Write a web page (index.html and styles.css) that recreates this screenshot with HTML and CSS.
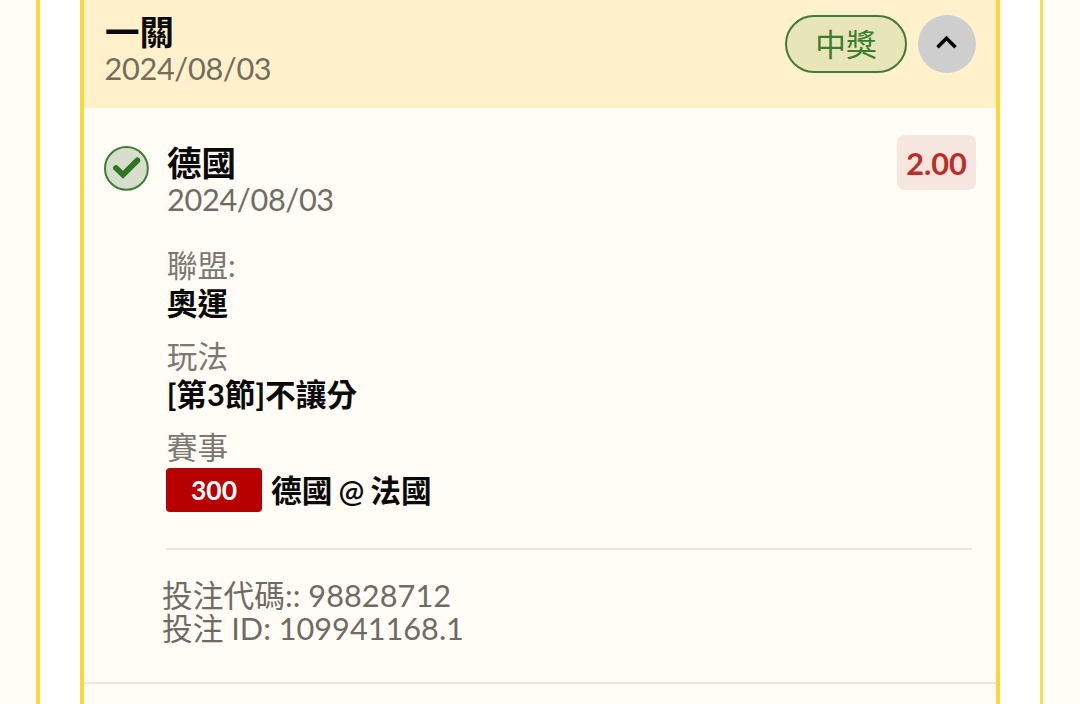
FILE: index.html
```html
<!DOCTYPE html>
<html lang="zh-Hant">
<head>
<meta charset="utf-8">
<title>投注</title>
<link rel="stylesheet" href="styles.css">
</head>
<body>
<div class="outer">
  <main class="card">
    <header class="card-head">
      <div class="head-text">
        <h1 class="title">一關</h1>
        <p class="date">2024/08/03</p>
      </div>
      <span class="status">中獎</span>
      <button class="toggle" aria-label="收合">
        <svg width="22" height="16" viewBox="0 0 22 16"><path d="M1.5 14.2 10.5 5.2 19.5 14.2" fill="none" stroke="#000" stroke-width="3.6"/></svg>
      </button>
    </header>
    <section class="bet">
      <svg class="check" width="46" height="46" viewBox="0 0 46 46"><circle cx="23.4" cy="23.4" r="21.4" fill="#d5dfcb" stroke="#427a38" stroke-width="2"/><path d="M13 23 20 29.8 34.4 15.4" fill="none" stroke="#2f7522" stroke-width="5.8" stroke-linecap="round"/></svg>
      <div class="bet-main">
        <div class="bet-top">
          <div class="head-text">
            <h2 class="title">德國</h2>
            <p class="date">2024/08/03</p>
          </div>
          <span class="odds">2.00</span>
        </div>
        <dl class="details">
          <dt>聯盟:</dt>
          <dd>奧運</dd>
          <dt>玩法</dt>
          <dd>[第3節]不讓分</dd>
          <dt>賽事</dt>
          <dd class="match"><span class="code">300</span><span class="teams">德國 @ 法國</span></dd>
        </dl>
        <div class="ids">
          <p class="bet-code">投注代碼:: 98828712</p>
          <p>投注 ID: 109941168.1</p>
        </div>
      </div>
    </section>
  </main>
</div>
</body>
</html>
```
FILE: styles.css
```css
* { box-sizing: border-box; margin: 0; padding: 0; }
body {
  height: 704px;
  overflow: hidden;
  padding: 0 37px 0 36px;
  background: #fffdf5;
  color: #0a0a0a;
  font-family: Lato, "Noto Sans CJK TC", sans-serif;
  font-size: 30.7px;
}
.outer {
  height: 704px;
  padding: 0 40px;
  background: #fff;
  border-left: 4px solid #fdd835;
  border-right: 3px solid #fbdc49;
}
.card {
  height: 704px;
  background: #fffdf5;
  border: solid #fdd835;
  border-width: 0 4px;
}
.card-head {
  display: flex;
  align-items: flex-start;
  height: 108px;
  padding: 15px 20px 0 21px;
  background: #fff1cc;
}
.head-text { flex: 1; }
.card-head .head-text { margin-top: -2px; }
.title {
  height: 37px;
  font-size: 34.5px;
  font-weight: 700;
  line-height: 37px;
}
.date {
  height: 37px;
  line-height: 37px;
  color: #6f6c66;
  letter-spacing: -0.33px;
}
.card-head .date { color: #736d5c; margin-left: -0.5px; }
.status {
  width: 122px;
  height: 58px;
  margin-right: 11px;
  border: 2px solid #427a38;
  border-radius: 29px;
  background: #e8e6b9;
  color: #3b7d2d;
  line-height: 56px;
  text-align: center;
}
.toggle {
  display: flex;
  align-items: center;
  justify-content: center;
  width: 58px;
  height: 58px;
  padding-bottom: 6px;
  border: 0;
  border-radius: 50%;
  background: #cecece;
}
.bet {
  display: flex;
  gap: 17px;
  height: 576px;
  padding: 27px 20px 0 19px;
  border-bottom: 2px solid #e9e5df;
}
.check { flex: none; margin-top: 10px; }
.bet-main { flex: 1; }
.bet-top { display: flex; height: 112px; }
.bet-top .head-text { padding: 9px 0 0 1px; }
.odds {
  width: 79px;
  height: 55px;
  border-radius: 8px;
  background: #f7e6df;
  color: #bb2e25;
  font-weight: 700;
  line-height: 57px;
  text-align: center;
}
.details {
  height: 303px;
  margin-right: 4px;
  border-bottom: 2px solid #e9e5df;
}
.details dt {
  height: 38px;
  padding-left: 0.7px;
  color: #7b7872;
  font-weight: 400;
  line-height: 38px;
}
.details dd {
  height: 53px;
  padding-left: 0.7px;
  font-weight: 700;
  line-height: 38px;
}
.details .match { display: flex; padding: 1px 0 0; }
.code {
  width: 96px;
  height: 44px;
  margin-right: 9px;
  border-radius: 4px;
  background: #b90000;
  color: #fff;
  font-size: 26.5px;
  font-weight: 700;
  line-height: 44px;
  text-align: center;
}
.teams {
  font-weight: 600;
  line-height: 46px;
  word-spacing: -1.6px;
}
.ids {
  margin: 29px 0 0 -4px;
  color: #6f6b64;
  line-height: 33px;
}
.bet-code { letter-spacing: 0.05px; }
```
